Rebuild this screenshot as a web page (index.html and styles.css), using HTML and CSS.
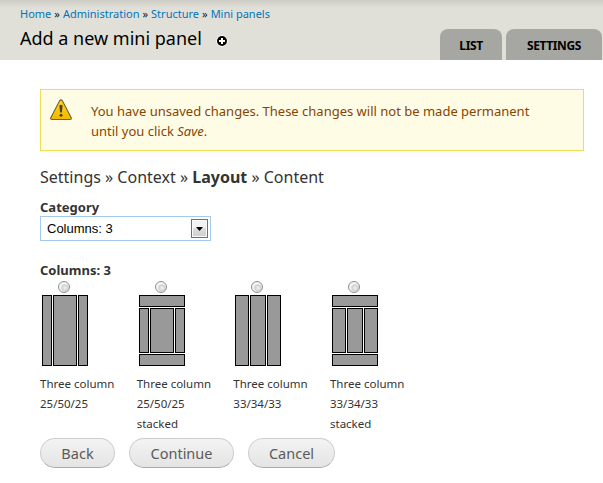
FILE: index.html
```html
<!DOCTYPE html>
<html lang="en">
<head>
<meta charset="utf-8">
<title>Add a new mini panel</title>
<link rel="stylesheet" href="styles.css">
</head>
<body>
<header class="branding">
  <div class="heading">
    <nav class="breadcrumb"><a>Home</a><span>»</span><a>Administration</a><span>»</span><a>Structure</a><span>»</span><a>Mini panels</a></nav>
    <div class="title-row">
      <h1>Add a new mini panel</h1>
      <svg class="add" width="12" height="12" viewBox="0 0 12 12"><circle cx="6" cy="6" r="5.7" fill="#fff"/><circle cx="6" cy="6" r="5" fill="#000"/><path d="M6 3v6M3 6h6" stroke="#fff" stroke-width="2"/></svg>
    </div>
  </div>
  <nav class="tabs"><a class="tab list">LIST</a><a class="tab settings">SETTINGS</a></nav>
</header>
<main>
  <div class="warning">
    <svg width="22" height="22" viewBox="0 0 22 22"><defs><linearGradient id="w" x2="0" y2="1"><stop offset="0" stop-color="#ffd21c"/><stop offset="1" stop-color="#f5b800"/></linearGradient></defs><path d="M9.6 1.8Q11 0 12.4 1.8L21.2 18.7Q21.8 20.5 20 20.5H2Q.2 20.5.8 18.7Z" fill="url(#w)" stroke="#6b6337" stroke-width="1.1"/><path d="M9.4 6.5Q11 5.2 12.6 6.5L11.9 13.5h-1.8Z" fill="#494427"/><circle cx="11" cy="16.3" r="1.5" fill="#494427"/></svg>
    <p><span class="line1">You have unsaved changes. These changes will not be made permanent</span><br><span class="line2">until you click <em>Save</em>.</span></p>
  </div>
  <div class="trail"><span>Settings » Context » </span><b>Layout</b><span> » Content</span></div>
  <label class="category">Category</label>
  <div class="select"><span>Columns: 3</span><i class="drop"><svg width="7" height="4" viewBox="0 0 7 4"><path d="M0 0h7L3.5 4Z"/></svg></i></div>
  <h2>Columns: 3</h2>
  <div class="layouts">
    <div class="layout"><i class="radio"></i><div class="icon quarter"><i></i><i></i><i></i></div><p>Three column<br>25/50/25</p></div>
    <div class="layout"><i class="radio"></i><div class="icon quarter stacked"><i class="bar"></i><i></i><i></i><i></i><i class="bar"></i></div><p>Three column<br>25/50/25<br>stacked</p></div>
    <div class="layout"><i class="radio"></i><div class="icon third"><i></i><i></i><i></i></div><p>Three column<br>33/34/33</p></div>
    <div class="layout"><i class="radio"></i><div class="icon third stacked"><i class="bar"></i><i></i><i></i><i></i><i class="bar"></i></div><p>Three column<br>33/34/33<br>stacked</p></div>
  </div>
  <div class="actions"><button class="back">Back</button><button class="continue">Continue</button><button class="cancel">Cancel</button></div>
</main>
</body>
</html>
```
FILE: styles.css
```css
* { box-sizing: border-box; }
body { margin: 0; background: #fff; color: #333; font-family: "Noto Sans", "Open Sans", sans-serif; white-space: nowrap; }
h1, h2, p { margin: 0; font-weight: normal; }

.branding { display: flex; justify-content: space-between; height: 60px; padding: 0 1px 0 20px; background: linear-gradient(#cdcdc5, #e0e0d8 8px); }
.breadcrumb { display: flex; gap: 3px; height: 16px; margin-top: 6px; font-size: 11px; line-height: 16px; color: #222; }
.breadcrumb a { color: #0074bd; }
.title-row { display: flex; align-items: center; gap: 14px; height: 32px; }
h1 { font-size: 18px; line-height: 32px; color: #000; }
.add { margin-top: 5px; }
.tabs { display: flex; gap: 4px; align-self: flex-end; }
.tab { height: 31px; border-radius: 8px 8px 0 0; background: #a6a7a2; color: #000; font-size: 12px; font-weight: bold; line-height: 33px; text-align: center; }
.list { width: 62px; letter-spacing: -.4px; }
.settings { width: 96px; letter-spacing: -.4px; }

main { padding: 29px 19px 0 40px; }
.warning { display: flex; gap: 19px; height: 62px; padding: 9px 9px; border: 1px solid #ed5; background: #fffce5; color: #840; font-size: 13px; line-height: 20px; }
.warning p { margin-top: 2px; }
.trail { height: 26px; margin-top: 13px; font-size: 16px; line-height: 26px; white-space: pre; }
.category { display: block; height: 20px; margin-top: 7px; font-size: 13px; font-weight: bold; line-height: 20px; }
.select { display: flex; align-items: center; justify-content: space-between; width: 171px; height: 25px; margin-top: -1px; padding: 0 2px 0 6px; border: 1px solid #a6c9f0; color: #000; font: 13px "Liberation Sans", Arial, sans-serif; }
.drop { display: flex; align-items: center; justify-content: center; width: 17px; height: 19px; border: 1px solid #707070; box-shadow: inset 0 0 0 1px #fafafa; background: linear-gradient(#f3f3f3 50%, #ddd 50%, #cfcfcf); }
h2 { height: 20px; margin-top: 19px; font-size: 13px; font-weight: bold; line-height: 20px; }

.layouts { display: flex; height: 153px; margin-top: 1px; }
.layout { width: 96.67px; }
.radio { display: block; width: 12px; height: 12px; margin: 0 0 2px 18px; border: 1px solid #8e8f8f; border-radius: 50%; background: radial-gradient(circle at 60% 60%, #f4f4f4 0, #cdd1d6 3px, #f4f4f4 4.5px); }
.icon { display: grid; gap: 1px; width: 46px; height: 71px; margin-left: 2px; }
.icon i { border: 1px solid #000; background: #999; }
.icon .bar { grid-column: 1 / -1; }
.quarter { grid-template-columns: 10px 24px 10px; }
.third { grid-template-columns: 14px 16px 14px; }
.stacked { grid-template-rows: 12px 45px 12px; }
.layout p { margin-top: 8px; font-size: 11.5px; line-height: 20px; }

.actions { display: flex; gap: 14px; margin-top: 4px; }
button { height: 30px; padding: 0; border: 1px solid #ccc; border-bottom-color: #aaa; border-radius: 15px; background: linear-gradient(#f3f3f3, #e4e4e4); color: #5a5a5a; font: 14.5px "Noto Sans", "Open Sans", sans-serif; }
.back { width: 75px; }
.continue { width: 105px; }
.cancel { width: 87px; }
```
